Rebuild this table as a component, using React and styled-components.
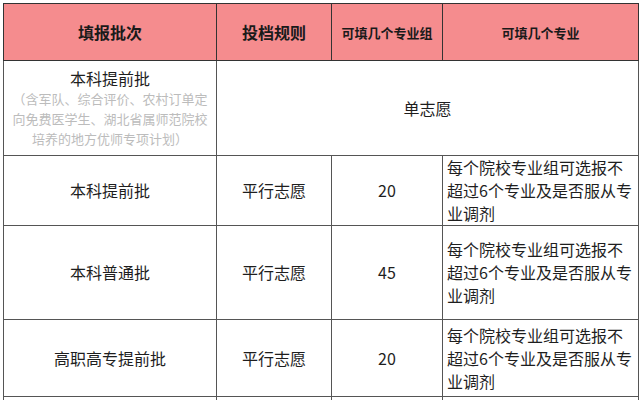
import React from 'react';
import styled, { createGlobalStyle } from 'styled-components';

const rows = [
  { batch: '本科提前批', rule: '平行志愿', groups: '20', height: 70 },
  { batch: '本科普通批', rule: '平行志愿', groups: '45', height: 94 },
  { batch: '高职高专提前批', rule: '平行志愿', groups: '20', height: 77 },
];

const majorText = '每个院校专业组可选报不超过6个专业及是否服从专业调剂';

const App = () => {
  return (
    <>
      <GlobalStyle />
      <Page>
        <Table>
          <colgroup>
            <col style={{ width: 213 }} />
            <col style={{ width: 115 }} />
            <col style={{ width: 111 }} />
            <col style={{ width: 196 }} />
          </colgroup>
          <thead>
            <Row $h={57}>
              <HeadCell>填报批次</HeadCell>
              <HeadCell>投档规则</HeadCell>
              <HeadCell $small>可填几个专业组</HeadCell>
              <HeadCell $small>可填几个专业</HeadCell>
            </Row>
          </thead>
          <tbody>
            <Row $h={95}>
              <Cell>
                <BatchName>本科提前批</BatchName>
                <Note>（含军队、综合评价、农村订单定向免费医学生、湖北省属师范院校培养的地方优师专项计划）</Note>
              </Cell>
              <Cell colSpan={3}>单志愿</Cell>
            </Row>
            {rows.map((r) => (
              <Row key={r.batch} $h={r.height}>
                <Cell>{r.batch}</Cell>
                <Cell>{r.rule}</Cell>
                <Cell>{r.groups}</Cell>
                <TextCell>{majorText}</TextCell>
              </Row>
            ))}
            <Row $h={40}>
              <Cell />
              <Cell />
              <Cell />
              <TextCell />
            </Row>
          </tbody>
        </Table>
      </Page>
    </>
  );
};

const GlobalStyle = createGlobalStyle`
  html, body {
    margin: 0;
    padding: 0;
    background: #ffffff;
    overflow: hidden;
  }
  body {
    font-family: "Noto Sans CJK SC", "Noto Sans", sans-serif;
    color: #1e1e1e;
  }
`;

const Page = styled.div`
  padding: 3px 0 0 3px;
  width: 641px;
  height: 400px;
  box-sizing: border-box;
`;

const Table = styled.table`
  border-collapse: collapse;
  table-layout: fixed;
  width: 635px;
  border: 1px solid #222;
`;

const Row = styled.tr`
  height: ${(p) => p.$h}px;
`;

const HeadCell = styled.th`
  background: #f58c8e;
  border: 1px solid #333;
  font-size: ${(p) => (p.$small ? '13px' : '16px')};
  font-weight: 700;
  color: #1a1a1a;
  text-align: center;
  vertical-align: middle;
  padding: 0;
`;

const Cell = styled.td`
  border: 1px solid #555;
  font-size: 16px;
  line-height: 23px;
  text-align: center;
  vertical-align: middle;
  padding: 0 3px;
`;

const TextCell = styled(Cell)`
  text-align: left;
  padding: 0 3px 0 4px;
`;

const BatchName = styled.div`
  font-size: 16px;
  line-height: 22px;
`;

const Note = styled.div`
  font-size: 13px;
  line-height: 20px;
  color: #bcbcbc;
  padding: 0 2px;
`;

export default App;
